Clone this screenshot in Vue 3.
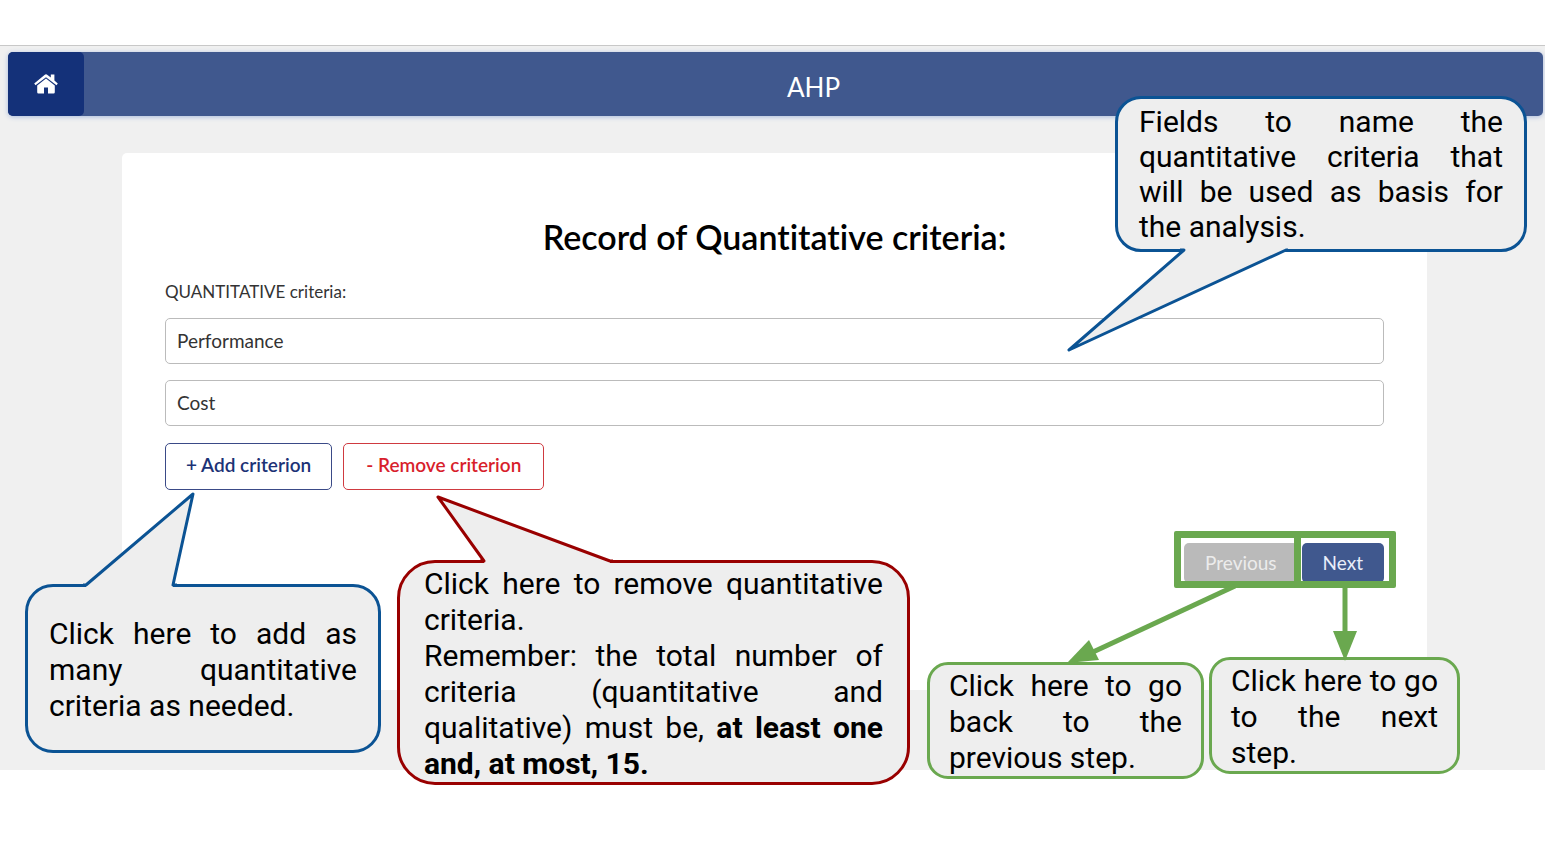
<script setup>
import { ref } from 'vue'

const criteria = ref(['Performance', 'Cost'])

function addCriterion() {
  if (criteria.value.length < 15) criteria.value.push('')
}

function removeCriterion() {
  if (criteria.value.length > 1) criteria.value.pop()
}
</script>

<template>
  <div class="stage">
    <div class="page">
      <header class="navbar">
        <a class="home" href="#" aria-label="Home">
          <svg width="24" height="20" viewBox="0 0 24 20" aria-hidden="true">
            <path d="M0.200 9.500 10.500 0.900Q12 -0.200 13.500 0.900L16.800 3.600V0.500H20.400V6.600L23.800 9.500 22.500 11.200 12 3.200 1.500 11.200z" fill="#fff" />
            <path d="M3.200 11.400 12 4.600l8.800 6.800v6.800a1.200 1.200 0 0 1-1.200 1.200H14V13.600h-4v5.800H4.400a1.200 1.200 0 0 1-1.200-1.200z" fill="#fff" />
          </svg>
        </a>
        <div class="brand">AHP</div>
      </header>

      <main class="card">
        <h1>Record of Quantitative criteria:</h1>
        <form @submit.prevent>
          <label class="label" for="criterion-0">QUANTITATIVE criteria:</label>
          <div class="fields">
            <input
              v-for="(name, i) in criteria"
              :id="`criterion-${i}`"
              :key="i"
              v-model="criteria[i]"
              type="text"
              :aria-label="`Criterion ${i + 1}`"
            />
          </div>
          <div class="actions">
            <button type="button" class="outline add" @click="addCriterion">+ Add criterion</button>
            <button type="button" class="outline remove" @click="removeCriterion">- Remove criterion</button>
          </div>
          <div class="steps">
            <button type="button" class="step previous">Previous</button>
            <button type="button" class="step next">Next</button>
          </div>
        </form>
      </main>
    </div>

    <div class="frame frame-previous"></div>
    <div class="frame frame-next"></div>

    <aside class="callout blue fields-note">
      <svg class="tail" width="222" height="106" viewBox="0 0 222 106" aria-hidden="true">
        <path class="tail-fill" d="M118 0V4L3 104 220 4V0z" />
        <path class="tail-line" d="M114 4H118L3 104 220 4H224" />
      </svg>
      <p>Fields to name the quantitative criteria that will be used as basis for the analysis.</p>
    </aside>

    <aside class="callout blue add-note">
      <svg class="tail" width="114" height="98" viewBox="0 0 114 98" aria-hidden="true">
        <path class="tail-fill" d="M3 97V94L110 3 90 94V97z" />
        <path class="tail-line" d="M0 94H3L110 3 90 94H94" />
      </svg>
      <p>Click here to add as many quantitative criteria as needed.</p>
    </aside>

    <aside class="callout red remove-note">
      <svg class="tail" width="178" height="70" viewBox="0 0 178 70" aria-hidden="true">
        <path class="tail-fill" d="M49 70V67L3 3 175 67V70z" />
        <path class="tail-line" d="M45 67H49L3 3 175 67H178" />
      </svg>
      <p>Click here to remove quantitative criteria.</p>
      <p>
        Remember: the total number of criteria (quantitative and qualitative) must be,
        <strong>at least one and, at most, 15.</strong>
      </p>
    </aside>

    <aside class="callout green previous-note">
      <svg class="arrow" width="174" height="80" viewBox="0 0 174 80" aria-hidden="true">
        <path d="M168 2 26 68" stroke="#6aa84f" stroke-width="5" />
        <path d="M0 79 22 56 32 76z" fill="#6aa84f" />
      </svg>
      <p>Click here to go back to the previous step.</p>
    </aside>

    <aside class="callout green next-note">
      <svg class="arrow" width="24" height="76" viewBox="0 0 24 76" aria-hidden="true">
        <path d="M12 0V50" stroke="#6aa84f" stroke-width="5" />
        <path d="M0 45H24L12 75z" fill="#6aa84f" />
      </svg>
      <p>Click here to go to the next step.</p>
    </aside>
  </div>
</template>

<style>
body {
  background: #fff;
}
</style>

<style scoped>
* {
  box-sizing: border-box;
}

.stage {
  position: relative;
  padding: 45px 0 97px;
  font-family: Lato, "Open Sans", sans-serif;
  font-variant-ligatures: none;
  color: #333;
}

.page {
  padding: 6px 2px 80px 8px;
  border-top: 1px solid #c8c8c8;
  background: #f0f0f0;
}

.navbar {
  display: flex;
  height: 64px;
  border-radius: 5px;
  background: #40588e;
  box-shadow: 0 1px 5px #a9bbdd;
}

.home {
  display: flex;
  align-items: center;
  justify-content: center;
  width: 76px;
  border-radius: 5px;
  background: #143179;
}

.brand {
  flex: 1;
  color: #fff;
  font-size: 26px;
  line-height: 70px;
  text-align: center;
}

.card {
  margin: 37px 116px 0 114px;
  padding: 64px 43px 107px;
  border-radius: 5px;
  background: #fff;
}

h1 {
  margin: 0 0 23px;
  color: #000;
  font-size: 34px;
  font-weight: 600;
  line-height: 40px;
  text-align: center;
}

.label {
  display: block;
  margin-bottom: 14px;
  font-size: 17px;
  line-height: 24px;
}

.fields {
  display: flex;
  flex-direction: column;
  gap: 16px;
}

input {
  width: 100%;
  height: 46px;
  padding: 0 11px 2px;
  border: 1px solid #bbb;
  border-radius: 5px;
  background: #fff;
  color: #333;
  font: inherit;
  font-size: 19px;
}

.actions {
  display: flex;
  gap: 11px;
  margin-top: 17px;
}

.outline {
  height: 47px;
  padding: 0 22px 4px;
  border: 1px solid;
  border-radius: 5px;
  background: #fff;
  font: inherit;
  font-size: 19px;
  font-weight: 600;
}

.outline.add {
  padding: 0 20px 4px;
  border-color: #3a4a87;
  color: #1c3276;
}

.outline.remove {
  border-color: #cf3a40;
  color: #d81e2c;
}

.steps {
  display: flex;
  justify-content: flex-end;
  gap: 4px;
  margin-top: 53px;
}

.step {
  height: 40px;
  padding: 0 21px 2px;
  border: 0;
  border-radius: 5px;
  color: #fff;
  font: inherit;
  font-size: 19px;
}

.previous {
  background: #bababa;
  color: #ececec;
}

.next {
  background: #40588e;
  color: #e8eefa;
}

.frame {
  position: absolute;
  top: 531px;
  height: 57px;
  border: 7px solid #6aa84f;
  border-radius: 2px;
  pointer-events: none;
}

.frame-previous {
  right: 244px;
  width: 127px;
}

.frame-next {
  right: 149px;
  width: 102px;
}

.callout {
  position: absolute;
  border: 3px solid;
  background: #eee;
  font-family: Roboto, sans-serif;
  font-size: 30px;
  line-height: 36px;
  text-align: justify;
}

.callout p {
  margin: 0;
  color: #000;
}

.blue {
  border-color: #0b5394;
  color: #0b5394;
}

.red {
  border-color: #990000;
  color: #990000;
}

.green {
  border-color: #6aa84f;
  color: #6aa84f;
}

.tail,
.arrow {
  position: absolute;
}

.tail-fill {
  fill: #eee;
}

.tail-line {
  fill: none;
  stroke: currentColor;
  stroke-width: 3;
  stroke-linejoin: round;
}

.fields-note {
  top: 96px;
  right: 18px;
  width: 412px;
  padding: 5px 21px;
  border-radius: 26px;
  line-height: 35px;
}

.fields-note .tail {
  top: 147px;
  left: -52px;
}

.add-note {
  top: 584px;
  left: 25px;
  width: 356px;
  padding: 29px 21px 26px;
  border-radius: 28px;
}

.add-note .tail {
  top: -96px;
  left: 55px;
}

.remove-note {
  top: 560px;
  left: 397px;
  width: 513px;
  padding: 3px 24px 0;
  border-radius: 38px;
}

.remove-note .tail {
  top: -69px;
  left: 35px;
}

.previous-note {
  top: 662px;
  right: 341px;
  width: 277px;
  padding: 3px 19px 0;
  border-radius: 21px;
}

.previous-note .arrow {
  top: -81px;
  left: 137px;
}

.next-note {
  top: 657px;
  right: 85px;
  width: 251px;
  padding: 3px 19px 0;
  border-radius: 21px;
}

.next-note .arrow {
  top: -74px;
  left: 121px;
}
</style>
